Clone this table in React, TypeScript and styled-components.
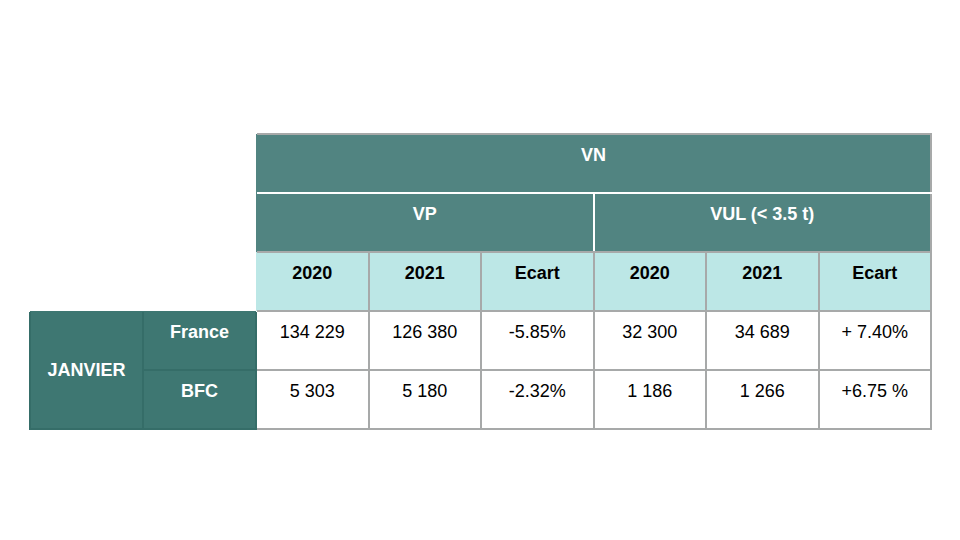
import styled, { createGlobalStyle } from "styled-components";

const GlobalStyle = createGlobalStyle`
    body {
        margin:0;
        background:#ffffff;
        font-family:"Liberation Sans", Arial, sans-serif;
    }
`;

const Page = styled.div`
    width:960px;
    height:540px;
    padding:133px 0 0 29px;
    box-sizing:border-box;
`;

const Table = styled.table`
    border-collapse:collapse;
    table-layout:fixed;
    width:902px;
    font-size:18px;
`;

const Cell = styled.td<{ $kind: "head" | "sub" | "data" | "side" | "blank" }>`
    height:35px;
    padding:10px 6px 12px;
    text-align:center;
    vertical-align:top;
    line-height:20px;
    border:2px solid ${p => p.$kind === "side" ? "#356d68" : p.$kind === "blank" ? "transparent" : "#a7a9a9"};
    background:${p =>
        p.$kind === "head" ? "#518481"
        : p.$kind === "sub" ? "#bce7e6"
        : p.$kind === "side" ? "#3e7772"
        : "#ffffff"};
    color:${p => p.$kind === "head" || p.$kind === "side" ? "#ffffff" : "#000000"};
    font-weight:${p => p.$kind === "data" ? 400 : 700};
`;

const Middle = styled(Cell)`
    vertical-align:middle;
    padding:0 6px;
`;

// the white rules between VN / VP and VP / VUL
const WhiteBottom = styled(Cell)`
    border-bottom-color:#ffffff;
`;

const WhiteRight = styled(Cell)`
    border-right-color:#ffffff;
`;

const years = ["2020", "2021", "Ecart"];

const rows = [
    { label: "France", values: ["134 229", "126 380", "-5.85%", "32 300", "34 689", "+ 7.40%"] },
    { label: "BFC", values: ["5 303", "5 180", "-2.32%", "1 186", "1 266", "+6.75 %"] },
];

export default function App() {
    return <Page>
        <GlobalStyle />
        <Table>
            <colgroup>
                <col style={{ width: 113 }} />
                <col style={{ width: 113 }} />
                {[0, 1, 2, 3, 4, 5].map(i => <col key={i} style={{ width: 112.5 }} />)}
            </colgroup>
            <tbody>
                <tr>
                    <Cell $kind="blank" colSpan={2} rowSpan={3} />
                    <WhiteBottom $kind="head" colSpan={6}>VN</WhiteBottom>
                </tr>
                <tr>
                    <WhiteRight $kind="head" colSpan={3}>VP</WhiteRight>
                    <Cell $kind="head" colSpan={3}>VUL (&lt; 3.5 t)</Cell>
                </tr>
                <tr>
                    {[...years, ...years].map((y, i) => <Cell key={i} $kind="sub">{y}</Cell>)}
                </tr>
                {rows.map((r, ri) => (
                    <tr key={r.label}>
                        {ri === 0 ? <Middle $kind="side" rowSpan={2}>JANVIER</Middle> : null}
                        <Cell $kind="side">{r.label}</Cell>
                        {r.values.map((v, i) => <Cell key={i} $kind="data">{v}</Cell>)}
                    </tr>
                ))}
            </tbody>
        </Table>
    </Page>;
}
